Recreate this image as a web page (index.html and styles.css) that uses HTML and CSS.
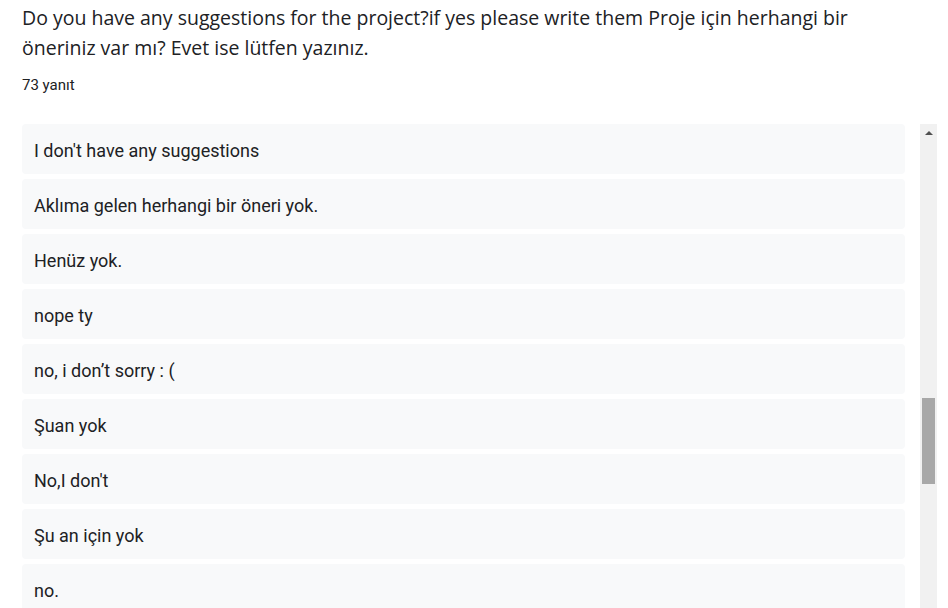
FILE: index.html
```html
<!DOCTYPE html>
<html lang="tr">
<head>
    <meta charset="UTF-8">
    <meta name="viewport" content="width=device-width, initial-scale=1.0">
    <title>Yanıtlar</title>
    <link rel="stylesheet" href="styles.css">
</head>
<body>
    <div class="summary">
        <h1 class="question">Do you have any suggestions for the project?if yes please write them Proje için herhangi bir öneriniz var mı? Evet ise lütfen yazınız.</h1>
        <div class="count">73 yanıt</div>

        <!-- Response list with its scrollbar -->
        <div class="answers">
            <div class="answer-list">
                <div class="answer">I don't have any suggestions</div>
                <div class="answer">Aklıma gelen herhangi bir öneri yok.</div>
                <div class="answer">Henüz yok.</div>
                <div class="answer">nope ty</div>
                <div class="answer">no, i don’t sorry : (</div>
                <div class="answer">Şuan yok</div>
                <div class="answer">No,I don't</div>
                <div class="answer">Şu an için yok</div>
                <div class="answer">no.</div>
            </div>
            <div class="scrollbar">
                <div class="scroll-arrow"></div>
                <div class="scroll-thumb"></div>
            </div>
        </div>
    </div>
</body>
</html>
```

FILE: styles.css
```css
/* General Body Styles */
body {
    margin: 0;
    padding: 0;
    background: #ffffff;
    color: #202124;
    font-family: 'Roboto', 'Liberation Sans', sans-serif;
    overflow: hidden;
}

.summary {
    padding: 3px 0 0 22px;
    width: 915px;
}

/* Question title */
.question {
    margin: 0;
    font-family: 'Open Sans', 'Liberation Sans', sans-serif;
    font-size: 19.5px;
    font-weight: 400;
    line-height: 30px;
    color: #202124;
    width: 870px;
}

.count {
    margin-top: 12px;
    font-size: 15px;
    line-height: 20px;
    color: #202124;
}

/* Answers + scrollbar */
.answers {
    display: flex;
    margin-top: 29px;
    height: 500px;
}

.answer-list {
    flex: 1;
    display: flex;
    flex-direction: column;
    gap: 5px;
    padding-right: 15px;
}

.answer {
    flex: none;
    box-sizing: border-box;
    height: 50px;
    padding: 3px 12px 0;
    line-height: 47px;
    background: #f8f9fa;
    border-radius: 4px;
    font-size: 18px;
    color: #202124;
    white-space: nowrap;
}

.scrollbar {
    width: 17px;
    flex: none;
    background: #f1f1f1;
    display: flex;
    flex-direction: column;
    align-items: center;
}

.scroll-arrow {
    margin-top: 7px;
    width: 0;
    height: 0;
    border-left: 4px solid transparent;
    border-right: 4px solid transparent;
    border-bottom: 4px solid #505050;
}

.scroll-thumb {
    margin-top: 263px;
    width: 13px;
    height: 86px;
    background: #a8a8a8;
}
```
